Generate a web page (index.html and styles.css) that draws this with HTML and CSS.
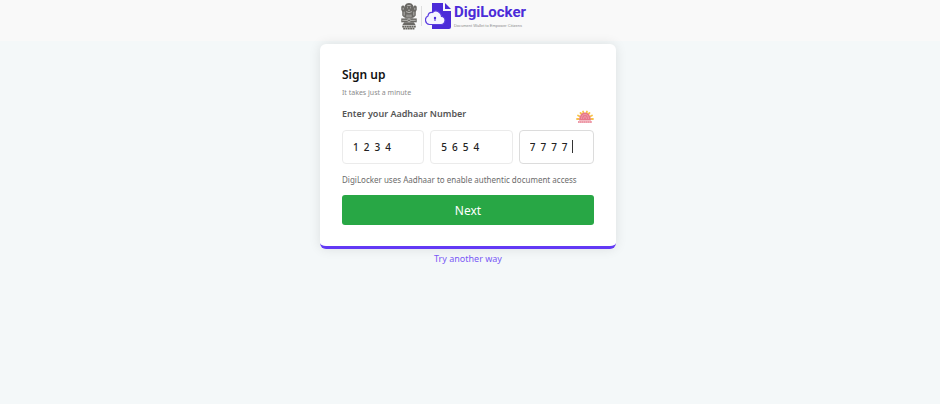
FILE: index.html
```html
<!DOCTYPE html>
<html lang="en">
<head>
<meta charset="utf-8">
<meta name="viewport" content="width=device-width, initial-scale=1">
<title>DigiLocker - Sign up</title>
<link rel="stylesheet" href="styles.css">
</head>
<body>
<header class="header">
  <svg class="emblem" viewBox="0 0 18 30" aria-hidden="true">
    <g fill="#6b6965">
      <path d="M5 3Q6 1 9 1T13 3L14 6 13 9 12 12H6L5 9 4 6Z"/>
      <path d="M4 4Q2 3 1 5L1 8 2 10 2 14 4 16H7L6 10Z"/>
      <path d="M14 4Q16 3 17 5L17 8 16 10 16 14 14 16H11L12 10Z"/>
      <path d="M6 11H12L13 17H5Z"/>
      <path d="M1 17H17V21H1Z"/>
      <path d="M4 21H14L16 24H2Z"/>
    </g>
    <g fill="none" stroke="#d9d8d6" stroke-width=".7">
      <path d="M7 4Q9 3 11 4M7 6H8M10 6H11M8 8.500H10M6 10Q9 12 12 10M3 6V8M15 6V8M4 10V14M14 10V14M7 13V16M9 13V16M11 13V16M2 19H7M11 19H16"/>
      <circle cx="9" cy="19" r="1.500"/>
    </g>
    <path d="M2 25.500H16M3 27.500H15" stroke="#67655f" stroke-width="1.800" stroke-dasharray="2 .4"/>
  </svg>
  <span class="divider"></span>
  <svg class="mark" viewBox="0 0 28 28" aria-hidden="true">
    <path d="M7 1H18V9H26V25Q26 27 24 27H7V1Z" fill="#4b2bd8"/>
    <path d="M20 1L26 7H20Z" fill="#4b2bd8"/>
    <path d="M4.500 22.500A4.500 4.500 0 0 1 3 14Q3.500 10 7.500 10.500Q11 7 15 11Q16.500 12.500 16.500 14.500Q20 15 20 18.500Q19.500 22.500 16 22.500Z" fill="#f6f5ff" stroke="#5a3ce0" stroke-width="1.200"/>
    <circle cx="10" cy="16" r="1.200" fill="#4b2bd8"/>
    <path d="M10 16V19" stroke="#4b2bd8"/>
  </svg>
  <div class="brand">
    <span class="brand-name">DigiLocker</span>
    <span class="brand-tag">Document Wallet to Empower Citizens</span>
  </div>
</header>
<main class="main">
  <form class="card">
    <h1 class="title">Sign up</h1>
    <p class="subtitle">It takes just a minute</p>
    <div class="label-row">
      <label class="label" for="part1">Enter your Aadhaar Number</label>
      <svg class="aadhaar" viewBox="0 0 18 14" aria-hidden="true">
        <g stroke="#f7c14b" stroke-width="1.800" stroke-linecap="round">
          <path d="M1 9H3M2 5.500L4 6.500M4.500 3L6 4.500M7 1.500L7.500 3M11 1.500L10.500 3M13.500 3L12 4.500M16 5.500L14 6.500M17 9H15"/>
        </g>
        <path d="M3 10.500A6 8 0 0 1 15 10.500Z" fill="#e8788a"/>
        <path d="M5.500 9A3.500 4.500 0 0 1 12.500 9M7.500 9A1.500 2.500 0 0 1 10.500 9" fill="none" stroke="#f5bdc2" stroke-width=".5"/>
        <path d="M2 12H16" stroke="#e8788a" stroke-width="1.600" stroke-dasharray="1.800 .2"/>
      </svg>
    </div>
    <div class="fields">
      <div class="field"><input class="input" id="part1" type="text" inputmode="numeric" value="1&ensp;2&ensp;3&ensp;4"></div>
      <div class="field"><input class="input" aria-label="Aadhaar digits 5 to 8" type="text" inputmode="numeric" value="5&ensp;6&ensp;5&ensp;4"></div>
      <div class="field field-last"><input class="input input-active" aria-label="Aadhaar digits 9 to 12" type="text" inputmode="numeric" value="7&ensp;7&ensp;7&ensp;7"><span class="caret"></span></div>
    </div>
    <p class="note">DigiLocker uses Aadhaar to enable authentic document access</p>
    <button class="next" type="button">Next</button>
  </form>
  <a class="alt" href="#">Try another way</a>
</main>
</body>
</html>
```
FILE: styles.css
```css
* {
  box-sizing: border-box;
}

body {
  margin: 0;
  min-height: 100vh;
  background: #f4f8f9;
  font-family: "Noto Sans", "Open Sans", sans-serif;
  color: #212529;
}

.header {
  display: flex;
  justify-content: center;
  align-items: flex-start;
  height: 41px;
  padding: 2px 14px 0 0;
  background: #f9f9f9;
}

.emblem {
  width: 18px;
  height: 29px;
}

.divider {
  width: 1px;
  height: 20px;
  margin: 4px 3px 0;
  background: #dedede;
}

.mark {
  width: 28px;
  height: 28px;
}

.brand {
  display: flex;
  flex-direction: column;
  margin-left: 1px;
}

.brand-name {
  font-family: Roboto, "Liberation Sans", sans-serif;
  font-size: 15px;
  line-height: 20px;
  font-weight: 700;
  color: #4b2bd8;
}

.brand-tag {
  font-family: "Liberation Sans", sans-serif;
  font-size: 4px;
  line-height: 8px;
  color: #8d8d8d;
}

.main {
  display: flex;
  flex-direction: column;
  align-items: center;
  padding: 3px 4px 0 0;
}

.card {
  width: 100%;
  max-width: 296px;
  padding: 21px 22px;
  background: #fff;
  border-bottom: 3px solid #6239f5;
  border-radius: 6px;
  box-shadow: 0 0 12px rgba(0, 0, 0, 0.1);
}

.title {
  margin: 0;
  font-size: 12px;
  line-height: 20px;
  font-weight: 600;
  color: #111;
}

.subtitle {
  margin: 0;
  font-size: 7px;
  line-height: 16px;
  color: #8b8b8b;
}

.label-row {
  display: flex;
  justify-content: space-between;
  align-items: flex-end;
  height: 23px;
}

.label {
  font-size: 9px;
  line-height: 12px;
  font-weight: 600;
  color: #555;
  padding-bottom: 4px;
}

.aadhaar {
  width: 18px;
  height: 14px;
}

.fields {
  display: flex;
  gap: 6px;
  margin-top: 6px;
}

.field {
  position: relative;
  flex: 82;
}

.field-last {
  flex: 75;
}

.input {
  display: block;
  width: 100%;
  height: 34px;
  padding: 0 10px;
  border: 1px solid #ebebeb;
  border-radius: 4px;
  background: #fff;
  font-family: inherit;
  font-size: 10px;
  font-weight: 500;
  color: #222;
}

.input-active {
  border-color: #dcdcdc;
}

.caret {
  position: absolute;
  left: 53px;
  top: 10px;
  width: 1px;
  height: 13px;
  background: #333;
}

.note {
  margin: 8px 0 7px;
  font-size: 8px;
  line-height: 16px;
  color: #6c6c6c;
}

.next {
  display: block;
  width: 100%;
  height: 30px;
  padding: 0;
  border: 0;
  border-radius: 3px;
  background: #28a745;
  font-family: inherit;
  font-size: 12px;
  color: #fff;
}

.alt {
  margin-top: 2px;
  font-size: 9px;
  line-height: 16px;
  color: #7959f5;
  text-decoration: none;
}
```
